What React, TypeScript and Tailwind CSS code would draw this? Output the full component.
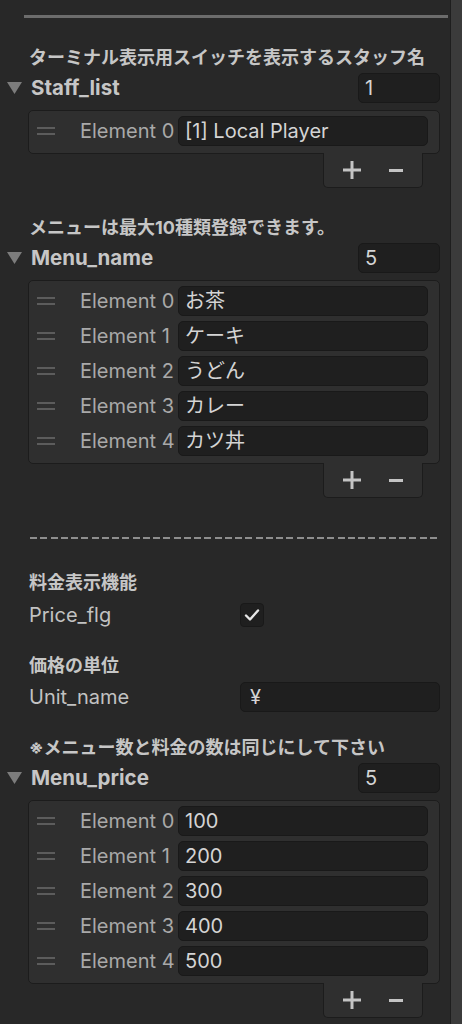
import React from "react";

const FONT = { fontFamily: 'Inter, "Noto Sans CJK JP", sans-serif' };

function Triangle() {
  return (
    <svg width="15" height="12" viewBox="0 0 15 12" className="shrink-0">
      <polygon points="0,0 15,0 7.5,12" fill="#7c7c7c" />
    </svg>
  );
}

function Handle() {
  return (
    <div className="w-[18px] flex flex-col gap-[4px] shrink-0">
      <div className="h-[2px] bg-[#5c5c5c]" />
      <div className="h-[2px] bg-[#5c5c5c]" />
    </div>
  );
}

function Field({ children, className = "" }: { children?: React.ReactNode; className?: string }) {
  return (
    <div
      className={
        "h-[30px] rounded-[5px] bg-[#1f1f1f] border border-[#191919] flex items-center pl-[6px] text-[20px] text-[#d4d4d4] leading-none whitespace-nowrap overflow-hidden " +
        className
      }
    >
      {children}
    </div>
  );
}

function Header({ children, className = "" }: { children: React.ReactNode; className?: string }) {
  return (
    <div className={"pl-[29px] h-[26px] flex items-center text-[18px] font-bold text-[#c6c6c6] whitespace-nowrap " + className}>
      {children}
    </div>
  );
}

function ArrayHeader({ name, count }: { name: string; count: string }) {
  return (
    <div className="mt-[3px] h-[30px] flex items-center pl-[7px] pr-[10px]">
      <Triangle />
      <span className="ml-[9px] text-[20.5px] font-bold text-[#c6c6c6] leading-none">{name}</span>
      <div className="flex-1" />
      <Field className="w-[82px]">{count}</Field>
    </div>
  );
}

function ListBox({ items }: { items: string[] }) {
  return (
    <div className="ml-[28px] mr-[10px] mt-[7px]">
      <div className="rounded-[5px] border border-[#1c1c1c] bg-[#2f2f2f] pt-[5px] pb-[7px] pl-[8px] pr-[11px] flex flex-col gap-[5px]">
        {items.map((v, i) => (
          <div key={i} className="flex items-center h-[30px]">
            <Handle />
            <span className="ml-[25px] w-[98px] shrink-0 text-[20px] text-[#a9a9a9] leading-none whitespace-nowrap">
              Element {i}
            </span>
            <Field className="flex-1">{v}</Field>
          </div>
        ))}
      </div>
      <div className="flex justify-end pr-[17px]">
        <div className="relative w-[100px] h-[35px] -mt-px border border-t-0 border-[#1c1c1c] bg-[#2f2f2f] rounded-b-[5px]">
          <svg width="18" height="18" viewBox="0 0 18 18" className="absolute left-[19px] top-[8px]">
            <rect x="0" y="7.5" width="18" height="3" fill="#c4c4c4" />
            <rect x="7.5" y="0" width="3" height="18" fill="#c4c4c4" />
          </svg>
          <svg width="14" height="3" viewBox="0 0 14 3" className="absolute left-[65px] top-[15.5px]">
            <rect x="0" y="0" width="14" height="3" fill="#c4c4c4" />
          </svg>
        </div>
      </div>
    </div>
  );
}

export default function App() {
  return (
    <div className="w-[462px] h-[1024px] bg-[#282828] flex overflow-hidden" style={FONT}>
      <div className="w-[450px] shrink-0 flex flex-col">
        <div className="mt-[15px] ml-[24px] mr-[2px] h-[3px] bg-[#6c6c6c]" />
        <Header className="mt-[26px]">ターミナル表示用スイッチを表示するスタッフ名</Header>
        <ArrayHeader name="Staff_list" count="1" />
        <ListBox items={["[1] Local Player"]} />

        <Header className="mt-[26px]">メニューは最大10種類登録できます。</Header>
        <ArrayHeader name="Menu_name" count="5" />
        <ListBox items={["お茶", "ケーキ", "うどん", "カレー", "カツ丼"]} />

        <div className="mt-[39px] ml-[30px] mr-[10px] h-[2px] bg-[repeating-linear-gradient(90deg,#8e8e8e_0px,#8e8e8e_7px,transparent_7px,transparent_10.25px)]" />

        <Header className="mt-[30px]">料金表示機能</Header>
        <div className="mt-[7px] h-[26px] flex items-center pl-[29px]">
          <span className="w-[211px] text-[20px] text-[#c2c2c2] leading-none">Price_flg</span>
          <div className="w-[24px] h-[24px] rounded-[4px] bg-[#1f1f1f] border border-[#191919] flex items-center justify-center">
            <svg width="16" height="14" viewBox="0 0 16 14">
              <path d="M2 7.5 L6 11.5 L14 2.5" fill="none" stroke="#e6e6e6" strokeWidth="2.4" strokeLinecap="round" strokeLinejoin="round" />
            </svg>
          </div>
        </div>

        <Header className="mt-[24px]">価格の単位</Header>
        <div className="mt-[4px] h-[30px] flex items-center pl-[29px] pr-[10px]">
          <span className="w-[211px] shrink-0 text-[20px] text-[#c2c2c2] leading-none">Unit_name</span>
          <Field className="flex-1 pl-[9px]">¥</Field>
        </div>

        <Header className="mt-[22px]">※メニュー数と料金の数は同じにして下さい</Header>
        <ArrayHeader name="Menu_price" count="5" />
        <ListBox items={["100", "200", "300", "400", "500"]} />
      </div>
      <div className="flex-1 bg-[#3b3b3b] border-l border-[#1e1e1e]" />
    </div>
  );
}
